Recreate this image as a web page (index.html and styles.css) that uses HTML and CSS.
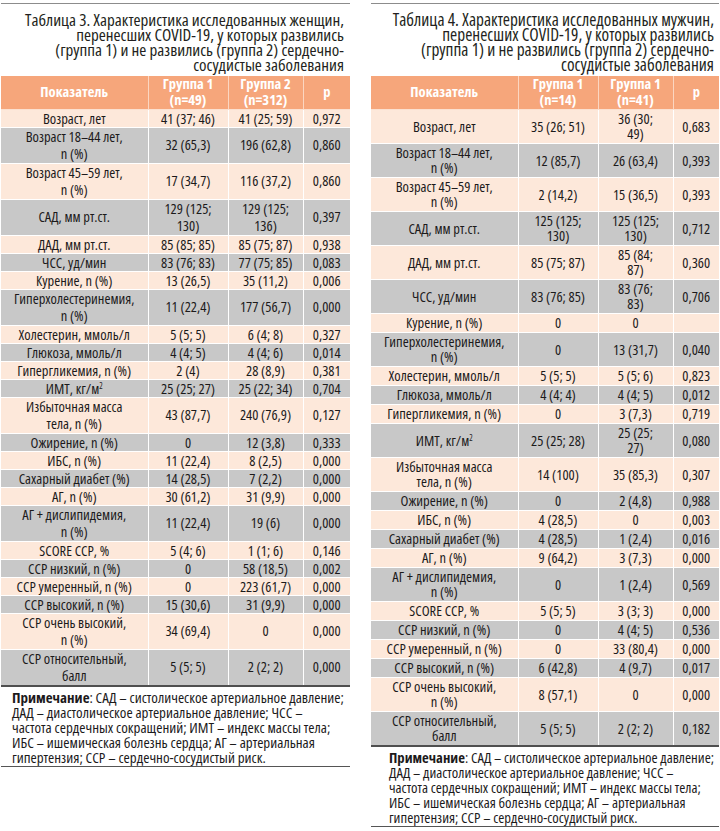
FILE: index.html
```html
<!DOCTYPE html>
<html lang="ru">
<head>
<meta charset="utf-8">
<title>Таблицы 3 и 4</title>
<link rel="stylesheet" href="styles.css">
</head>
<body>
<div class="page">
  <section class="col col-left">
    <h2 class="title">Таблица 3. Характеристика исследованных женщин,<br>перенесших COVID-19, у которых развились<br>(группа 1) и не развились (группа 2) сердечно-<br>сосудистые заболевания</h2>
    <table class="tbl t3">
      <colgroup><col class="c1"><col class="c2"><col class="c3"><col class="c4"></colgroup>
      <thead>
        <tr><th>Показатель</th><th>Группа 1<br>(n=49)</th><th>Группа 2<br>(n=312)</th><th>p</th></tr>
      </thead>
      <tbody>
        <tr><td>Возраст, лет</td><td>41 (37; 46)</td><td>41 (25; 59)</td><td>0,972</td></tr>
        <tr class="d"><td>Возраст 18–44 лет,<br>n (%)</td><td>32 (65,3)</td><td>196 (62,8)</td><td>0,860</td></tr>
        <tr class="d"><td>Возраст 45–59 лет,<br>n (%)</td><td>17 (34,7)</td><td>116 (37,2)</td><td>0,860</td></tr>
        <tr class="d"><td>САД, мм рт.ст.</td><td>129 (125;<br>130)</td><td>129 (125;<br>136)</td><td>0,397</td></tr>
        <tr><td>ДАД, мм рт.ст.</td><td>85 (85; 85)</td><td>85 (75; 87)</td><td>0,938</td></tr>
        <tr><td>ЧСС, уд/мин</td><td>83 (76; 83)</td><td>77 (75; 85)</td><td>0,083</td></tr>
        <tr><td>Курение, n (%)</td><td>13 (26,5)</td><td>35 (11,2)</td><td>0,006</td></tr>
        <tr class="d"><td>Гиперхолестеринемия,<br>n (%)</td><td>11 (22,4)</td><td>177 (56,7)</td><td>0,000</td></tr>
        <tr><td>Холестерин, ммоль/л</td><td>5 (5; 5)</td><td>6 (4; 8)</td><td>0,327</td></tr>
        <tr><td>Глюкоза, ммоль/л</td><td>4 (4; 5)</td><td>4 (4; 6)</td><td>0,014</td></tr>
        <tr><td>Гипергликемия, n (%)</td><td>2 (4)</td><td>28 (8,9)</td><td>0,381</td></tr>
        <tr><td>ИМТ, кг/м<sup>2</sup></td><td>25 (25; 27)</td><td>25 (22; 34)</td><td>0,704</td></tr>
        <tr class="d"><td>Избыточная масса<br>тела, n (%)</td><td>43 (87,7)</td><td>240 (76,9)</td><td>0,127</td></tr>
        <tr><td>Ожирение, n (%)</td><td>0</td><td>12 (3,8)</td><td>0,333</td></tr>
        <tr><td>ИБС, n (%)</td><td>11 (22,4)</td><td>8 (2,5)</td><td>0,000</td></tr>
        <tr><td>Сахарный диабет (%)</td><td>14 (28,5)</td><td>7 (2,2)</td><td>0,000</td></tr>
        <tr><td>АГ, n (%)</td><td>30 (61,2)</td><td>31 (9,9)</td><td>0,000</td></tr>
        <tr class="d"><td>АГ + дислипидемия,<br>n (%)</td><td>11 (22,4)</td><td>19 (6)</td><td>0,000</td></tr>
        <tr><td>SCORE ССР, %</td><td>5 (4; 6)</td><td>1 (1; 6)</td><td>0,146</td></tr>
        <tr><td>ССР низкий, n (%)</td><td>0</td><td>58 (18,5)</td><td>0,002</td></tr>
        <tr><td>ССР умеренный, n (%)</td><td>0</td><td>223 (61,7)</td><td>0,000</td></tr>
        <tr><td>ССР высокий, n (%)</td><td>15 (30,6)</td><td>31 (9,9)</td><td>0,000</td></tr>
        <tr class="d"><td>ССР очень высокий,<br>n (%)</td><td>34 (69,4)</td><td>0</td><td>0,000</td></tr>
        <tr class="d"><td>ССР относительный,<br>балл</td><td>5 (5; 5)</td><td>2 (2; 2)</td><td>0,000</td></tr>
      </tbody>
    </table>
    <p class="note"><b>Примечание</b>: САД – систолическое артериальное давление;<br>ДАД – диастолическое артериальное давление; ЧСС –<br>частота сердечных сокращений; ИМТ – индекс массы тела;<br>ИБС – ишемическая болезнь сердца; АГ – артериальная<br>гипертензия; ССР – сердечно-сосудистый риск.</p>
  </section>

  <section class="col col-right">
    <h2 class="title">Таблица 4. Характеристика исследованных мужчин,<br>перенесших COVID-19, у которых развились<br>(группа 1) и не развились (группа 2) сердечно-<br>сосудистые заболевания</h2>
    <table class="tbl t4">
      <colgroup><col class="c1"><col class="c2"><col class="c3"><col class="c4"></colgroup>
      <thead>
        <tr><th>Показатель</th><th>Группа 1<br>(n=14)</th><th>Группа 1<br>(n=41)</th><th>p</th></tr>
      </thead>
      <tbody>
        <tr><td>Возраст, лет</td><td>35 (26; 51)</td><td>36 (30;<br>49)</td><td>0,683</td></tr>
        <tr><td>Возраст 18–44 лет,<br>n (%)</td><td>12 (85,7)</td><td>26 (63,4)</td><td>0,393</td></tr>
        <tr><td>Возраст 45–59 лет,<br>n (%)</td><td>2 (14,2)</td><td>15 (36,5)</td><td>0,393</td></tr>
        <tr><td>САД, мм рт.ст.</td><td>125 (125;<br>130)</td><td>125 (125;<br>130)</td><td>0,712</td></tr>
        <tr><td>ДАД, мм рт.ст.</td><td>85 (75; 87)</td><td>85 (84;<br>87)</td><td>0,360</td></tr>
        <tr><td>ЧСС, уд/мин</td><td>83 (76; 85)</td><td>83 (76;<br>83)</td><td>0,706</td></tr>
        <tr><td>Курение, n (%)</td><td>0</td><td>0</td><td></td></tr>
        <tr><td>Гиперхолестеринемия,<br>n (%)</td><td>0</td><td>13 (31,7)</td><td>0,040</td></tr>
        <tr><td>Холестерин, ммоль/л</td><td>5 (5; 5)</td><td>5 (5; 6)</td><td>0,823</td></tr>
        <tr><td>Глюкоза, ммоль/л</td><td>4 (4; 4)</td><td>4 (4; 5)</td><td>0,012</td></tr>
        <tr><td>Гипергликемия, n (%)</td><td>0</td><td>3 (7,3)</td><td>0,719</td></tr>
        <tr><td>ИМТ, кг/м<sup>2</sup></td><td>25 (25; 28)</td><td>25 (25;<br>27)</td><td>0,080</td></tr>
        <tr><td>Избыточная масса<br>тела, n (%)</td><td>14 (100)</td><td>35 (85,3)</td><td>0,307</td></tr>
        <tr><td>Ожирение, n (%)</td><td>0</td><td>2 (4,8)</td><td>0,988</td></tr>
        <tr><td>ИБС, n (%)</td><td>4 (28,5)</td><td>0</td><td>0,003</td></tr>
        <tr><td>Сахарный диабет (%)</td><td>4 (28,5)</td><td>1 (2,4)</td><td>0,016</td></tr>
        <tr><td>АГ, n (%)</td><td>9 (64,2)</td><td>3 (7,3)</td><td>0,000</td></tr>
        <tr><td>АГ + дислипидемия,<br>n (%)</td><td>0</td><td>1 (2,4)</td><td>0,569</td></tr>
        <tr><td>SCORE ССР, %</td><td>5 (5; 5)</td><td>3 (3; 3)</td><td>0,000</td></tr>
        <tr><td>ССР низкий, n (%)</td><td>0</td><td>4 (4; 5)</td><td>0,536</td></tr>
        <tr><td>ССР умеренный, n (%)</td><td>0</td><td>33 (80,4)</td><td>0,000</td></tr>
        <tr><td>ССР высокий, n (%)</td><td>6 (42,8)</td><td>4 (9,7)</td><td>0,017</td></tr>
        <tr><td>ССР очень высокий,<br>n (%)</td><td>8 (57,1)</td><td>0</td><td>0,000</td></tr>
        <tr><td>ССР относительный,<br>балл</td><td>5 (5; 5)</td><td>2 (2; 2)</td><td>0,182</td></tr>
      </tbody>
    </table>
    <p class="note"><b>Примечание</b>: САД – систолическое артериальное давление;<br>ДАД – диастолическое артериальное давление; ЧСС –<br>частота сердечных сокращений; ИМТ – индекс массы тела;<br>ИБС – ишемическая болезнь сердца; АГ – артериальная<br>гипертензия; ССР – сердечно-сосудистый риск.</p>
  </section>
</div>
</body>
</html>
```

FILE: styles.css
```css
* { box-sizing: border-box; }

html, body {
  margin: 0;
  padding: 0;
  background: #ffffff;
}

body {
  font-family: "Open Sans", "DejaVu Sans", sans-serif;
  font-stretch: 75%;
  color: #1c1a1b;
  width: 720px;
  height: 831px;
  overflow: hidden;
}

.page {
  display: grid;
  grid-template-columns: 349px 348px;
  column-gap: 21px;
  padding: 3px 0 0 1px;
}

.col {
  border-top: 1px solid #8c8c8c;
}

.title {
  margin: 0;
  padding: 8px 6px 0 0;
  height: 72px;
  text-align: right;
  font-size: 17.05px;
  line-height: 15px;
  font-weight: 500;
  color: #231f20;
  white-space: nowrap;
}

.col-right .title {
  padding-right: 5px;
  font-size: 17.3px;
}

.tbl {
  width: 100%;
  border-collapse: collapse;
  table-layout: fixed;
  font-size: 14.5px;
  font-weight: 500;
  text-align: center;
}

.c1 { width: 147px; }
.c2 { width: 80px; }
.c3 { width: 75px; }
.c4 { width: auto; }

.tbl th {
  background: #f6a67b;
  color: #ffffff;
  font-weight: bold;
  font-size: 14.5px;
  line-height: 16px;
  height: 33px;
  padding: 0;
  border-left: 1px solid #fbd6c1;
  border-bottom: 1px solid #fbe0d0;
}

.tbl th:first-child { border-left: 0; }

.tbl td {
  padding: 0;
  white-space: nowrap;
  border-left: 1px solid #ffffff;
  border-bottom: 1px solid #ffffff;
  vertical-align: middle;
}

.tbl td:first-child { border-left: 0; }

.tbl tbody tr:nth-child(odd) td { background: #fde8da; }
.tbl tbody tr:nth-child(even) td { background: #c8c8c8; }

.tbl tbody tr:last-child td { border-bottom: 2px solid #4f4f4f; }

.t3 td { line-height: 17px; }
.t3 tr.d td { padding-bottom: 1px; }

.t4 td {
  line-height: 15px;
  padding: 1.5px 0;
}

sup {
  font-size: 8px;
  line-height: 0;
  vertical-align: 5px;
}

.note {
  margin: 0;
  padding: 3px 6px 1px 11px;
  font-size: 15px;
  font-weight: 500;
  line-height: 15px;
  border-bottom: 1px solid #555555;
  white-space: nowrap;
}

.col-right .note {
  padding-left: 18px;
  font-size: 14.7px;
}

.note b { font-weight: bold; }
```
